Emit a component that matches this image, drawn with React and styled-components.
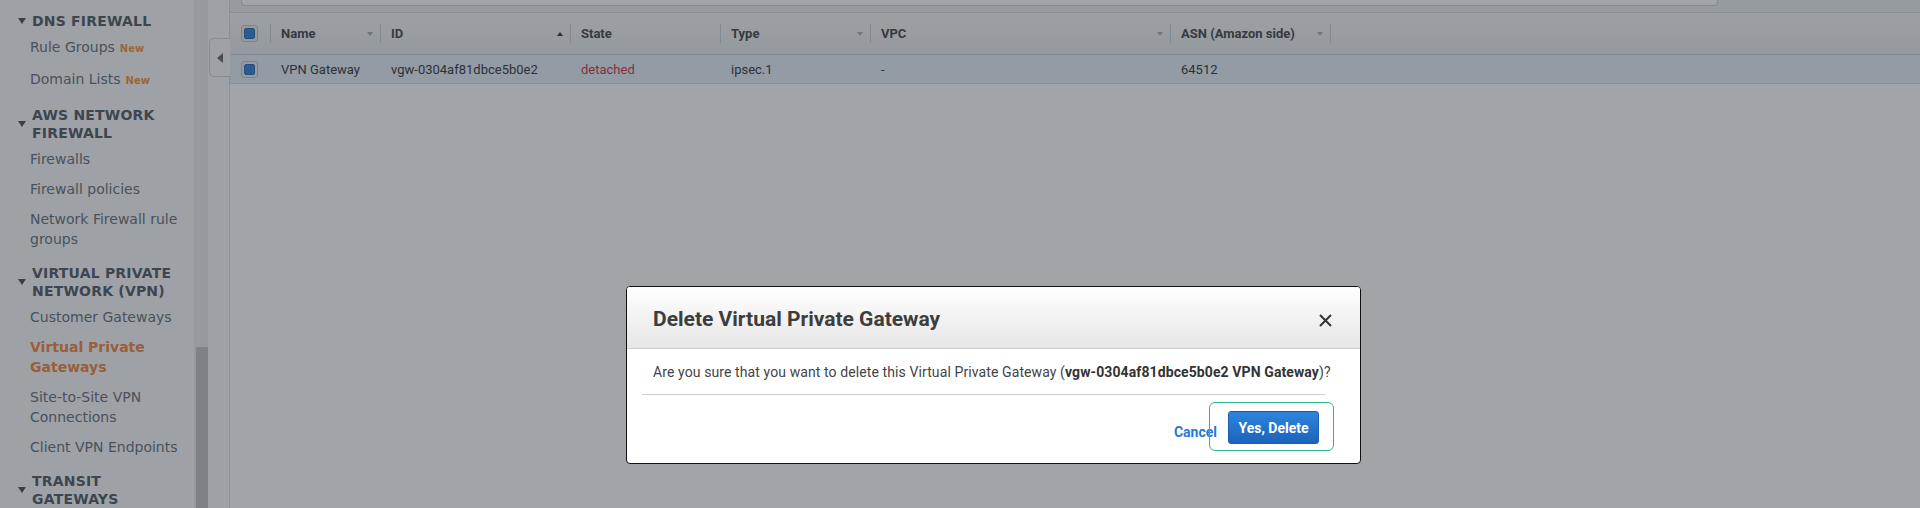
import React from "react";
import styled, { createGlobalStyle } from "styled-components";

const GlobalStyle = createGlobalStyle`
  html, body { margin: 0; padding: 0; height: 100%; overflow: hidden; }
  body { font-family: "Liberation Sans", Arial, sans-serif; background: #fff; }
  #root { height: 100%; }
  * { box-sizing: border-box; }
`;

const COLS = "41px 110px 190px 150px 150px 300px 160px 1fr";

const Page = styled.div`
  position: relative;
  display: flex;
  width: 1920px;
  height: 508px;
  overflow: hidden;
  background: #fff;
`;

/* ---------- Sidebar ---------- */
const Sidebar = styled.nav`
  width: 194px;
  flex: none;
  overflow: hidden;
  background: #fafafa;
  padding-top: 2px;
  font-family: "DejaVu Sans", Verdana, sans-serif;
`;

const NavSection = styled.section``;

const NavHeader = styled.div`
  display: flex;
  align-items: center;
  margin: 10px 0 2px;
  padding: 0 8px 0 18px;
  font-size: 14px;
  font-weight: bold;
  line-height: 18px;
  letter-spacing: 0.2px;
  color: #4f565d;
`;

const Caret = styled.span`
  flex: none;
  width: 0;
  height: 0;
  margin-right: 6px;
  border-left: 4px solid transparent;
  border-right: 4px solid transparent;
  border-top: 6px solid #474e56;
`;

const NavItem = styled.div`
  padding: 5px 8px 5px 30px;
  font-size: 14px;
  line-height: 20px;
  color: ${(p) => (p.$active ? "#f0843a" : "#666c72")};
  font-weight: ${(p) => (p.$active ? "bold" : "normal")};
`;

const NewBadge = styled.span`
  margin-left: 5px;
  font-size: 10px;
  font-weight: bold;
  color: #f5912e;
`;

const ScrollTrack = styled.div`
  width: 14px;
  flex: none;
  display: flex;
  flex-direction: column;
  justify-content: flex-end;
  padding-left: 2px;
  background: #ececed;
`;

const ScrollThumb = styled.div`
  height: 161px;
  background: #c0c2c4;
`;

const Gutter = styled.div`
  width: 22px;
  flex: none;
  padding-top: 38px;
  background: #fafafa;
  border-right: 1px solid #d7dbde;
`;

const CollapseTab = styled.div`
  display: flex;
  align-items: center;
  justify-content: center;
  width: 21px;
  height: 39px;
  margin-left: 1px;
  border: 1px solid #cfd3d6;
  border-right: none;
  border-radius: 5px 0 0 5px;
  background: #f9f9f9;
`;

const TabArrow = styled.span`
  width: 0;
  height: 0;
  border-top: 5.5px solid transparent;
  border-bottom: 5.5px solid transparent;
  border-right: 6px solid #5d646c;
`;

/* ---------- Main ---------- */
const Main = styled.main`
  flex: 1;
  min-width: 0;
  display: flex;
  flex-direction: column;
  background: #fff;
  font-family: Roboto, "Liberation Sans", Arial, sans-serif;
`;

const TopBar = styled.div`
  height: 13px;
  padding-left: 11px;
  background: #eceeee;
  border-bottom: 1px solid #d2d8da;
`;

const SearchBox = styled.div`
  width: 1477px;
  height: 6px;
  background: #fff;
  border: 1px solid #c6cdd1;
  border-top: none;
  border-radius: 0 0 4px 4px;
`;

const HeaderRow = styled.div`
  display: grid;
  grid-template-columns: ${COLS};
  height: 42px;
  align-items: center;
  background: linear-gradient(#f7f7f7, #e9ebec);
  border-bottom: 1px solid #cdd2d5;
`;

const HeaderCell = styled.div`
  display: flex;
  align-items: center;
  height: 100%;
  padding-left: ${(p) => (p.$check ? "11px" : "10px")};
  font-size: 13px;
  font-weight: bold;
  color: #444;
`;

const Label = styled.span`
  flex: 1;
  white-space: nowrap;
`;

const SortArrow = styled.span`
  flex: none;
  width: 0;
  height: 0;
  margin-right: 7px;
  border-left: 3.5px solid transparent;
  border-right: 3.5px solid transparent;
  ${(p) =>
    p.$up
      ? "border-bottom: 4px solid #333;"
      : "border-top: 4px solid #a9acaf;"}
`;

const ColDivider = styled.span`
  flex: none;
  width: 1px;
  height: 19px;
  margin-left: auto;
  background: #c9ced2;
`;

const DataRow = styled.div`
  display: grid;
  grid-template-columns: ${COLS};
  height: 29px;
  align-items: center;
  background: #e6eef7;
  border-bottom: 1px solid #d6dbdf;
`;

const Cell = styled.div`
  padding-left: ${(p) => (p.$check ? "11px" : "10px")};
  font-size: 13px;
  color: ${(p) => (p.$danger ? "#d1323f" : "#333")};
  white-space: nowrap;
`;

const CheckBox = styled.span`
  display: flex;
  align-items: center;
  justify-content: center;
  width: 17px;
  height: 17px;
  border: 1px solid #bfc3c6;
  border-radius: 3px;
  background: #ececec;
`;

const CheckFill = styled.span`
  width: 11px;
  height: 11px;
  border-radius: 2px;
  background: #2f7dd3;
  border: 1px solid #2667b2;
`;

/* ---------- Modal ---------- */
const Overlay = styled.div`
  position: absolute;
  inset: 0;
  background: rgba(36, 46, 58, 0.43);
`;

const Modal = styled.div`
  position: absolute;
  left: 626px;
  top: 286px;
  width: 735px;
  background: #fff;
  border: 1px solid #111;
  border-radius: 4px;
  font-family: Roboto, "Liberation Sans", Arial, sans-serif;
`;

const ModalHeader = styled.div`
  display: flex;
  align-items: center;
  justify-content: space-between;
  height: 62px;
  padding: 0 28px 0 26px;
  background: linear-gradient(#ffffff, #e6e6e6);
  border-bottom: 1px solid #cdcdcd;
  border-radius: 3px 3px 0 0;
`;

const Title = styled.h2`
  margin: 2px 0 0;
  font-size: 21px;
  font-weight: 700;
  color: #3d3d3d;
`;

const CloseButton = styled.button`
  display: flex;
  margin-top: 6px;
  padding: 0;
  border: none;
  background: none;
`;

const ModalBody = styled.div`
  padding: 13px 0 12px 26px;
  font-size: 14px;
  line-height: 20px;
  letter-spacing: 0.1px;
  color: #444;
`;

const Strong = styled.strong`
  color: #333;
`;

const Rule = styled.div`
  height: 1px;
  margin: 0 35px 0 15px;
  background: #cfcfcf;
`;

const Footer = styled.div`
  display: flex;
  align-items: flex-end;
  justify-content: flex-end;
  padding: 16px 41px 19px 0;
`;

const CancelLink = styled.a`
  margin: 0 11px 2px 0;
  font-size: 14px;
  line-height: 20px;
  font-weight: bold;
  color: #1f78dc;
  text-decoration: none;
`;

const PrimaryButton = styled.button`
  position: relative;
  height: 33px;
  width: 91px;
  padding: 0;
  border: 1px solid #1a5dab;
  border-radius: 3px;
  background: linear-gradient(#2e84dd, #1b64bc);
  color: #fff;
  font-family: Roboto, "Liberation Sans", Arial, sans-serif;
  font-size: 14px;
  font-weight: bold;

  &::after {
    content: "";
    position: absolute;
    top: -10px;
    bottom: -8px;
    left: -20px;
    right: -16px;
    border: 1px solid #2db892;
    border-radius: 6px;
    pointer-events: none;
  }
`;

const nav = [
  {
    title: "DNS FIREWALL",
    items: [
      { label: "Rule Groups", isNew: true },
      { label: "Domain Lists", isNew: true },
    ],
  },
  {
    title: "AWS NETWORK FIREWALL",
    items: [
      { label: "Firewalls" },
      { label: "Firewall policies" },
      { label: "Network Firewall rule groups" },
    ],
  },
  {
    title: "VIRTUAL PRIVATE NETWORK (VPN)",
    items: [
      { label: "Customer Gateways" },
      { label: "Virtual Private Gateways", active: true },
      { label: "Site-to-Site VPN Connections" },
      { label: "Client VPN Endpoints" },
    ],
  },
  {
    title: "TRANSIT GATEWAYS",
    items: [
      { label: "Transit Gateways" },
      { label: "Transit Gateway Attachments" },
    ],
  },
];

const columns = [
  { label: "Name" },
  { label: "ID", up: true },
  { label: "State", noArrow: true },
  { label: "Type" },
  { label: "VPC" },
  { label: "ASN (Amazon side)" },
];

const Check = () => (
  <CheckBox>
    <CheckFill />
  </CheckBox>
);

export default function App() {
  return (
    <>
      <GlobalStyle />
      <Page>
        <Sidebar>
          {nav.map((sec) => (
            <NavSection key={sec.title}>
              <NavHeader>
                <Caret />
                <span>{sec.title}</span>
              </NavHeader>
              {sec.items.map((it) => (
                <NavItem key={it.label} $active={it.active}>
                  {it.label}
                  {it.isNew && <NewBadge>New</NewBadge>}
                </NavItem>
              ))}
            </NavSection>
          ))}
        </Sidebar>
        <ScrollTrack>
          <ScrollThumb />
        </ScrollTrack>
        <Gutter>
          <CollapseTab>
            <TabArrow />
          </CollapseTab>
        </Gutter>
        <Main>
          <TopBar>
            <SearchBox />
          </TopBar>
          <HeaderRow>
            <HeaderCell $check>
              <Check />
              <ColDivider />
            </HeaderCell>
            {columns.map((c) => (
              <HeaderCell key={c.label}>
                <Label>{c.label}</Label>
                {!c.noArrow && <SortArrow $up={c.up} />}
                <ColDivider />
              </HeaderCell>
            ))}
            <HeaderCell />
          </HeaderRow>
          <DataRow>
            <Cell $check>
              <Check />
            </Cell>
            <Cell>VPN Gateway</Cell>
            <Cell>vgw-0304af81dbce5b0e2</Cell>
            <Cell $danger>detached</Cell>
            <Cell>ipsec.1</Cell>
            <Cell>-</Cell>
            <Cell>64512</Cell>
            <Cell />
          </DataRow>
        </Main>
        <Overlay />
        <Modal role="dialog">
          <ModalHeader>
            <Title>Delete Virtual Private Gateway</Title>
            <CloseButton aria-label="Close">
              <svg width="13" height="13" viewBox="0 0 13 13">
                <path d="M1 1 L12 12 M12 1 L1 12" stroke="#333" strokeWidth="2" />
              </svg>
            </CloseButton>
          </ModalHeader>
          <ModalBody>
            Are you sure that you want to delete this Virtual Private Gateway (
            <Strong>vgw-0304af81dbce5b0e2 VPN Gateway</Strong>)?
          </ModalBody>
          <Rule />
          <Footer>
            <CancelLink href="#">Cancel</CancelLink>
            <PrimaryButton>Yes, Delete</PrimaryButton>
          </Footer>
        </Modal>
      </Page>
    </>
  );
}
